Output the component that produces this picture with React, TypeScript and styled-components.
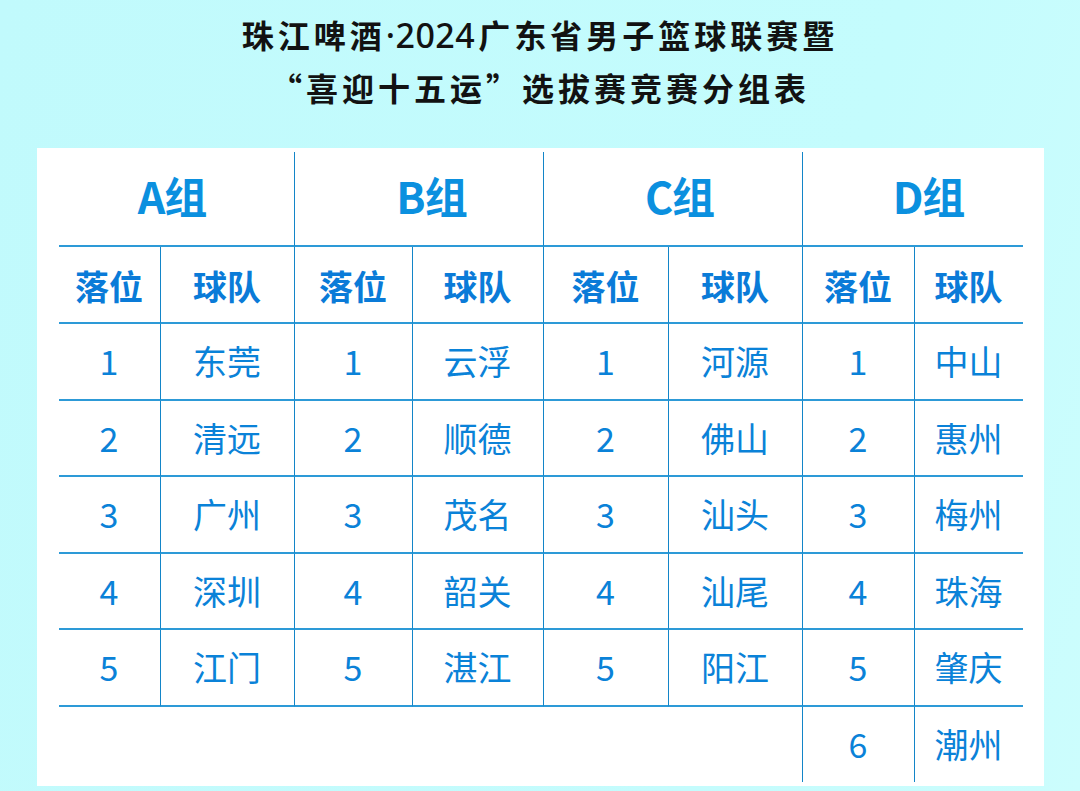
import React from 'react';
import styled, { createGlobalStyle } from 'styled-components';

const GlobalStyle = createGlobalStyle`
  html, body {
    margin: 0;
    padding: 0;
  }
  body {
    background: #c3fbfd;
    font-family: "Noto Sans CJK SC", "Noto Sans", sans-serif;
  }
`;

const Page = styled.div`
  width: 1080px;
  height: 791px;
  overflow: hidden;
  display: flex;
  flex-direction: column;
  align-items: center;
  background: linear-gradient(105deg, #c1fafc 0%, #c4fcfd 70%, #ccfdfd 100%);
`;

const Title = styled.h1`
  margin: 8px 0 0;
  font-size: 32px;
  font-weight: 700;
  line-height: 52px;
  letter-spacing: 4px;
  color: #121212;
  text-align: center;
`;

// digits and the dot are set in the latin face, tighter
const Latin = styled.span`
  font-family: "Noto Sans", sans-serif;
  font-size: 34px;
  font-weight: 500;
  letter-spacing: 0.5px;
  margin-right: 3px;
`;

const Card = styled.div`
  margin-top: 35px;
  width: 1007px;
  box-sizing: border-box;
  padding: 4px 21px 4px 22px;
  background: #ffffff;
`;

const Table = styled.div`
  display: grid;
  grid-template-columns: 101px 134px 118px 131px 125px 134px 112px 109px;
  grid-template-rows: 95px 77px repeat(5, 76.5px) 75px;
`;

type CellKind = 'group' | 'head' | 'body';

const Cell = styled.div<{ $kind: CellKind; $left?: boolean; $bottom?: boolean; $span?: number; $shift?: number }>`
  display: flex;
  align-items: center;
  justify-content: center;
  box-sizing: border-box;
  grid-column: span ${p => p.$span ?? 1};
  border-left: ${p => (p.$left ? '1px solid #1385c8' : 'none')};
  border-bottom: ${p => (p.$bottom ? '2px solid #2d9ad7' : 'none')};
  font-size: ${p => (p.$kind === 'group' ? '43px' : '34px')};
  font-weight: ${p => (p.$kind === 'body' ? 400 : 700)};
  letter-spacing: ${p => (p.$kind === 'group' ? '-1px' : '0')};
  color: ${p => (p.$kind === 'group' ? '#0b90df' : p.$kind === 'head' ? '#0a7bd8' : '#0a82d8')};
  line-height: 1;
  padding-top: ${p => (p.$kind === 'head' ? '2px' : '0')};
  padding-bottom: ${p => (p.$kind === 'group' ? '6px' : '0')};
  padding-left: ${p => Math.max(0, 2 * (p.$shift ?? 0))}px;
  padding-right: ${p => Math.max(0, -2 * (p.$shift ?? 0))}px;
`;

const groups = [
  { name: 'A组', shift: -4, teams: ['东莞', '清远', '广州', '深圳', '江门'] },
  { name: 'B组', shift: 13, teams: ['云浮', '顺德', '茂名', '韶关', '湛江'] },
  { name: 'C组', shift: 7, teams: ['河源', '佛山', '汕头', '汕尾', '阳江'] },
  { name: 'D组', shift: 16, teams: ['中山', '惠州', '梅州', '珠海', '肇庆', '潮州'] },
];

export default function App() {
  return (
    <>
      <GlobalStyle />
      <Page>
        <Title>
          珠江啤酒<Latin>·2024</Latin>广东省男子篮球联赛暨
          <br />
          “喜迎十五运”选拔赛竞赛分组表
        </Title>
        <Card>
          <Table>
            {groups.map((g, gi) => (
              <Cell key={g.name} $kind="group" $span={2} $left={gi > 0} $bottom $shift={g.shift}>
                {g.name}
              </Cell>
            ))}
            {groups.map((g, gi) => (
              <React.Fragment key={'h' + g.name}>
                <Cell $kind="head" $left={gi > 0} $bottom>落位</Cell>
                <Cell $kind="head" $left $bottom>球队</Cell>
              </React.Fragment>
            ))}
            {[0, 1, 2, 3, 4].map(r =>
              groups.map((g, gi) => (
                <React.Fragment key={g.name + r}>
                  <Cell $kind="body" $left={gi > 0} $bottom>{r + 1}</Cell>
                  <Cell $kind="body" $left $bottom>{g.teams[r]}</Cell>
                </React.Fragment>
              ))
            )}
            <Cell $kind="body" $span={6} />
            <Cell $kind="body" $left>6</Cell>
            <Cell $kind="body" $left>{groups[3].teams[5]}</Cell>
          </Table>
        </Card>
      </Page>
    </>
  );
}
